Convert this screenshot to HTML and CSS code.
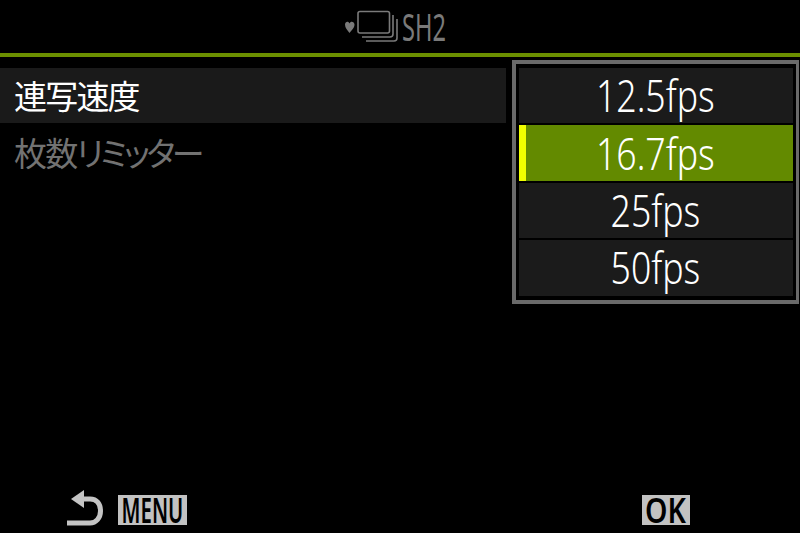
FILE: index.html
```html
<!DOCTYPE html>
<html lang="ja">
<head>
<meta charset="utf-8">
<title>連写速度</title>
<link rel="stylesheet" href="styles.css">
</head>
<body>
<div class="screen">
  <header class="top">
    <svg class="mode-icon" width="54" height="38" viewBox="0 0 54 38" aria-hidden="true">
      <path d="M5.500 25 C3.500 22 1 20 1 16.500 C1 13.500 4.500 12.500 5.500 15.500 C6.500 12.500 10.500 13.500 10.500 16.500 C10.500 20 7.500 22 5.500 25Z" fill="#7a7a7a"/>
      <rect x="14" y="3.500" width="31.500" height="21.500" rx="2" fill="none" stroke="#7a7a7a" stroke-width="1.600"/>
      <path d="M49 7V26a3 3 0 0 1-3 3H18" fill="none" stroke="#7a7a7a" stroke-width="1.600"/>
      <path d="M53 11V30a3 3 0 0 1-3 3H22" fill="none" stroke="#7a7a7a" stroke-width="1.600"/>
    </svg>
    <span class="mode-label">SH2</span>
  </header>
  <main class="content">
    <ul class="settings">
      <li class="setting current">連写速度</li>
      <li class="setting muted">枚数<span class="kana">リミッター</span></li>
    </ul>
    <ul class="picker">
      <li class="option"><span class="narrow">12.5fps</span></li>
      <li class="option selected"><span class="narrow">16.7fps</span></li>
      <li class="option"><span class="narrow">25fps</span></li>
      <li class="option"><span class="narrow">50fps</span></li>
    </ul>
  </main>
  <footer class="bottom">
    <div class="hint">
      <svg width="38" height="38" viewBox="0 0 38 38" aria-hidden="true">
        <path d="M18 1V19L5 10Z" fill="#c4c4c4"/>
        <path d="M15 10H24C31 10 34.500 15 34.500 22C34.500 29 30 34 24 34H1" fill="none" stroke="#c4c4c4" stroke-width="5"/>
      </svg>
      <span class="key key-menu"><span class="key-text menu-text">MENU</span></span>
    </div>
    <div class="hint">
      <span class="key key-ok"><span class="key-text ok-text">OK</span></span>
    </div>
  </footer>
</div>
</body>
</html>
```
FILE: styles.css
```css
* { box-sizing: border-box; margin: 0; padding: 0; }
html, body { width: 800px; height: 533px; background: #000; overflow: hidden; }
body { font-family: "Noto Sans", "Noto Sans CJK JP", sans-serif; }
ul { list-style: none; }

.screen { width: 800px; height: 533px; display: flex; flex-direction: column; }

.top {
  height: 57px;
  flex: none;
  border-bottom: 4px solid #6b8f00;
  display: flex;
  justify-content: flex-start;
  align-items: flex-start;
  padding: 3px 0 0 344px;
}
.mode-icon { margin-top: 5px; flex: none; }
.mode-label {
  display: inline-block;
  margin-left: 4px;
  color: #7a7a7a;
  font-size: 38px;
  font-weight: 400;
  line-height: 46px;
  width: 46px;
  transform: scaleX(.62);
  transform-origin: left center;
}

.content { flex: 1; display: flex; align-items: flex-start; padding-top: 3px; }

.settings { width: 506px; flex: none; margin-top: 8px; }
.setting {
  height: 55px;
  padding-left: 14px;
  font-family: "Noto Sans CJK JP", sans-serif;
  font-size: 33px;
  letter-spacing: -1.8px;
  line-height: 55px;
  white-space: nowrap;
  margin-bottom: 2px;
}
.current { background: #1a1a1a; color: #fff; }
.muted { color: #727272; }
.kana { font-feature-settings: "palt"; letter-spacing: -3.4px; }

.picker {
  margin-left: 6px;
  width: 287px;
  height: 243.500px;
  border: solid #6a6a6a;
  border-width: 4px 3px 4px 4px;
  padding: 4px 3px;
  display: flex;
  flex-direction: column;
  gap: 2px;
}
.option {
  flex: 1;
  background: #1b1b1b;
  color: #fff;
  display: flex;
  align-items: center;
  justify-content: center;
  font-size: 44px;
  font-weight: 350;
  line-height: 55px;
}
.selected { background: #638a00; border-left: 7px solid #f0ff00; padding-right: 7px; }
.narrow { display: inline-block; transform: scaleX(.81); margin-left: -2px; }

.bottom {
  height: 44px;
  flex: none;
  display: flex;
  justify-content: space-between;
  align-items: flex-start;
  padding: 0 110px 0 66px;
}
.hint { display: flex; align-items: flex-start; gap: 14px; }
.key {
  margin-top: 6px;
  height: 30px;
  background: #c2c2c2;
  color: #000;
  display: flex;
  align-items: center;
  justify-content: center;
  font-weight: 600;
  font-size: 34px;
  line-height: 30px;
}
.key-menu { width: 69px; }
.key-ok { width: 48px; }
.key-text { display: inline-block; white-space: nowrap; }
.menu-text { transform: scaleX(.6); }
.ok-text { transform: scaleX(.84); margin-left: -2px; }
```
